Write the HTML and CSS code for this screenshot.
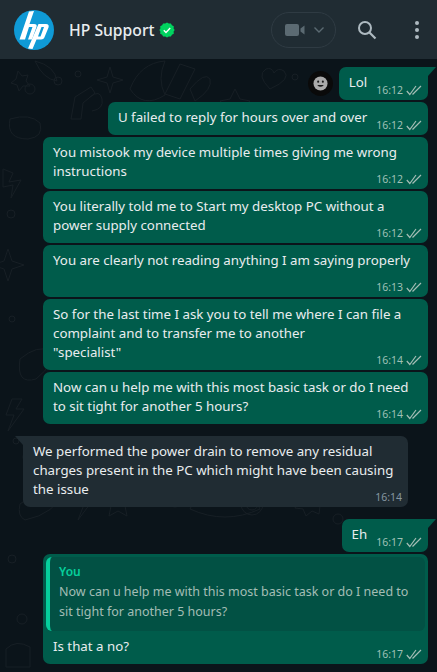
FILE: index.html
```html
<!DOCTYPE html>
<html lang="en">
<head>
  <meta charset="UTF-8" />
  <title>HP Support</title>
  <link rel="stylesheet" href="styles.css">
</head>
<body>
<div class="app">
  <header class="topbar">
    <svg class="avatar" viewBox="0 0 40 40">
      <circle cx="20" cy="20" r="20" fill="#0f9ad6"/>
      <path d="M15 1.5 L20 1 L15.5 14 L20 14 Q23.5 14 22.5 17 L18 29.5 L14 29.5 L18.5 17 L15 17 L11 29.5 L5.5 29.5 Z" fill="#fff"/>
      <path d="M24.5 14 L32 14 Q35.5 14 34.5 17.5 L31 26 Q30 29.5 27 29.5 L22.5 29.5 L18.5 39 L14 38.5 Z M27.5 17 L24 26.5 L26.5 26.5 L30 17 Z" fill="#fff" fill-rule="evenodd"/>
    </svg>
    <div class="contact">HP Support</div>
    <svg class="verified" viewBox="0 0 16 16">
      <path d="M8 0.5l1.8 1.1 2.1-.2 1 1.9 1.9 1-.2 2.1L15.7 8l-1.1 1.6.2 2.1-1.9 1-1 1.9-2.1-.2L8 15.5l-1.8-1.1-2.1.2-1-1.9-1.9-1 .2-2.1L.3 8l1.1-1.6-.2-2.1 1.9-1 1-1.9 2.1.2z" fill="#00d35f"/>
      <path d="M4.8 8.2l2.2 2.2 4.2-4.3" fill="none" stroke="#fff" stroke-width="1.4"/>
    </svg>
    <div class="call-pill">
      <svg class="cam" viewBox="0 0 20 12"><rect x="0" y="0" width="14" height="12" rx="2" fill="#5b6a72"/><path d="M15.5 4.5l4-3v9l-4-3z" fill="#5b6a72"/></svg>
      <svg class="chev" viewBox="0 0 10 6"><path d="M.5 .5l4.5 4.5 4.5-4.5" fill="none" stroke="#5b6a72" stroke-width="1.4"/></svg>
    </div>
    <svg class="search" viewBox="0 0 20 20"><circle cx="8" cy="8" r="6" fill="none" stroke="#aebac1" stroke-width="2"/><path d="M12.5 12.5l6 6" stroke="#aebac1" stroke-width="2.2"/></svg>
    <div class="dots"><i></i><i></i><i></i></div>
  </header>

  <main class="chat">
    <svg class="doodles" viewBox="0 0 437 613">
      <g fill="none" stroke="#171f25" stroke-width="1">
        <path d="M18 12l4 5 6-1-2 6 4 5-7 0-4 5-2-6-6-2 5-4z"/>
        <path d="M35 2q20 5 22 20q-14-2-22-20z"/>
        <circle cx="58" cy="22" r="4"/><circle cx="30" cy="30" r="5"/><circle cx="78" cy="15" r="3"/>
        <path d="M110 8l3 10 10 3-10 3-3 10-3-10-10-3 10-3z"/>
        <path d="M75 38l16-10 4 6-12 10-2 16h-10z"/><path d="M90 38q10-8 12 2t-10 12"/>
        <path d="M130 30q10-26 35-28q-8 18 0 34q-22 14-35-6z"/>
        <path d="M165 35l15-30 15 5-15 30z"/><path d="M190 30q15-18 20-10q3 10-15 22z"/>
        <path d="M235 30l5 10 10 2-8 7 2 10-9-5-9 5 2-10-8-7 10-2z"/>
        <path d="M10 60q20-6 30 4q4 14-12 16q-22 0-18-20z"/>
        <path d="M270 30q-14-14-4-20q6-2 8 4q4-6 10-2q8 8-14 18z"/><circle cx="295" cy="18" r="3"/>
        <path d="M3 110l10 4-4 9 12-2-10 18 2-13-10 2z"/><circle cx="11" cy="155" r="4"/>
        <path d="M8 190l4 12 12 4-12 4-4 12-4-12-12-4 12-4z"/>
        <path d="M20 300q18-15 30-8q6 12-14 28q-20 6-16-20z"/><circle cx="12" cy="260" r="3"/>
        <path d="M12 340l-6 16h8l-6 16 16-22h-8l6-10z"/><circle cx="16" cy="382" r="3"/><circle cx="28" cy="398" r="5"/>
        <path d="M20 445q30-22 45-14q-10 24-40 30q-8-4-5-16z"/>
        <path d="M82 425l-7 18h10l-7 18 18-24h-9l7-12z"/><circle cx="70" cy="410" r="4"/><circle cx="100" cy="428" r="3"/>
        <path d="M118 430l4 9 10 1-7 7 2 10-9-5-9 5 2-10-7-7 10-1z"/>
        <path d="M150 395q30-8 50 0v22h-50z"/><circle cx="175" cy="440" r="8"/>
        <path d="M205 420q20-10 40 0l15 30q-35 16-70 0z"/><circle cx="252" cy="445" r="11"/><circle cx="252" cy="445" r="6"/>
        <path d="M238 400v20m6-20v20"/>
        <path d="M300 425l8 3 6-5 3 7 8 1-3 7 5 6-7 3-1 8-7-3-6 5-3-7-8-1 3-7-5-6 7-3z"/><circle cx="308" cy="440" r="5"/>
        <circle cx="338" cy="460" r="5"/>
        <circle cx="12" cy="500" r="4"/><circle cx="22" cy="560" r="5"/><path d="M6 590q10-10 24-2v20h-24z"/>
      </g>
    </svg>

    <div class="row out">
      <div class="react"><svg viewBox="0 0 16 16"><circle cx="8" cy="8" r="7.5" fill="#aaa"/><circle cx="5.5" cy="6" r="1.1" fill="#1a1a1a"/><circle cx="10.5" cy="6" r="1.1" fill="#1a1a1a"/><path d="M4.5 9.5q3.5 4 7 0z" fill="#1a1a1a"/></svg></div>
      <div class="bubble tail">Lol<span class="meta">16:12<svg class="tick" viewBox="0 0 16 11"><path d="M.8 6l3 3.5L10 1M6.5 9.5L15 1" fill="none" stroke="#a4bdb5" stroke-width="1.2"/></svg></span></div>
    </div>
    <div class="row out">
      <div class="bubble">U failed to reply for hours over and over<span class="meta">16:12<svg class="tick" viewBox="0 0 16 11"><path d="M.8 6l3 3.5L10 1M6.5 9.5L15 1" fill="none" stroke="#a4bdb5" stroke-width="1.2"/></svg></span></div>
    </div>
    <div class="row out">
      <div class="bubble wide">You mistook my device multiple times giving me wrong<br>instructions<span class="meta">16:12<svg class="tick" viewBox="0 0 16 11"><path d="M.8 6l3 3.5L10 1M6.5 9.5L15 1" fill="none" stroke="#a4bdb5" stroke-width="1.2"/></svg></span></div>
    </div>
    <div class="row out">
      <div class="bubble wide">You literally told me to Start my desktop PC without a<br>power supply connected<span class="meta">16:12<svg class="tick" viewBox="0 0 16 11"><path d="M.8 6l3 3.5L10 1M6.5 9.5L15 1" fill="none" stroke="#a4bdb5" stroke-width="1.2"/></svg></span></div>
    </div>
    <div class="row out">
      <div class="bubble wide">You are clearly not reading anything I am saying properly<br>&nbsp;<span class="meta">16:13<svg class="tick" viewBox="0 0 16 11"><path d="M.8 6l3 3.5L10 1M6.5 9.5L15 1" fill="none" stroke="#a4bdb5" stroke-width="1.2"/></svg></span></div>
    </div>
    <div class="row out">
      <div class="bubble wide">So for the last time I ask you to tell me where I can file a<br>complaint and to transfer me to another<br>"specialist"<span class="meta">16:14<svg class="tick" viewBox="0 0 16 11"><path d="M.8 6l3 3.5L10 1M6.5 9.5L15 1" fill="none" stroke="#a4bdb5" stroke-width="1.2"/></svg></span></div>
    </div>
    <div class="row out">
      <div class="bubble wide">Now can u help me with this most basic task or do I need<br>to sit tight for another 5 hours?<span class="meta">16:14<svg class="tick" viewBox="0 0 16 11"><path d="M.8 6l3 3.5L10 1M6.5 9.5L15 1" fill="none" stroke="#a4bdb5" stroke-width="1.2"/></svg></span></div>
    </div>

    <div class="row in">
      <div class="bubble recv tail-left">We performed the power drain to remove any residual<br>charges present in the PC which might have been causing<br>the issue<span class="meta">16:14</span></div>
    </div>

    <div class="row out eh">
      <div class="bubble tail">Eh<span class="meta">16:17<svg class="tick" viewBox="0 0 16 11"><path d="M.8 6l3 3.5L10 1M6.5 9.5L15 1" fill="none" stroke="#a4bdb5" stroke-width="1.2"/></svg></span></div>
    </div>
    <div class="row out">
      <div class="bubble wide reply-bubble">
        <div class="quote">
          <div class="quote-name">You</div>
          <div class="quote-text">Now can u help me with this most basic task or do I need to<br>sit tight for another 5 hours?</div>
        </div>
        <div class="reply-text">Is that a no?<span class="meta">16:17<svg class="tick" viewBox="0 0 16 11"><path d="M.8 6l3 3.5L10 1M6.5 9.5L15 1" fill="none" stroke="#a4bdb5" stroke-width="1.2"/></svg></span></div>
      </div>
    </div>
  </main>
</div>
</body>
</html>
```

FILE: styles.css
```css
* {
  box-sizing: border-box;
}
html, body {
  margin: 0;
  height: 100%;
}
body {
  background: #0b141a;
  font-family: "Noto Sans", "Open Sans", sans-serif;
  color: #e9edef;
  overflow: hidden;
}
.app {
  width: 437px;
  height: 672px;
  display: flex;
  flex-direction: column;
}
.topbar {
  height: 59px;
  flex: none;
  background: #202c33;
  display: flex;
  align-items: center;
  padding: 0 18px 0 14px;
}
.avatar {
  width: 40px;
  height: 40px;
  flex: none;
}
.contact {
  margin-left: 15px;
  font-size: 15.7px;
  font-weight: 500;
  color: #e9edef;
  line-height: 20px;
}
.verified {
  width: 16px;
  height: 16px;
  margin-left: 4px;
}
.call-pill {
  margin-left: auto;
  width: 65px;
  height: 36px;
  border: 1px solid #2f3b43;
  border-radius: 18px;
  display: flex;
  align-items: center;
  padding-left: 13px;
  gap: 9px;
}
.cam {
  width: 20px;
  height: 12px;
}
.chev {
  width: 10px;
  height: 6px;
}
.search {
  width: 20px;
  height: 20px;
  margin-left: 21px;
}
.dots {
  margin-left: 38px;
  display: flex;
  flex-direction: column;
  gap: 3px;
}
.dots i {
  width: 4px;
  height: 4px;
  border-radius: 50%;
  background: #aebac1;
}
.chat {
  position: relative;
  flex: 1;
  overflow: hidden;
  display: flex;
  flex-direction: column;
  padding-top: 8px;
  gap: 2px;
}
.doodles {
  position: absolute;
  left: 0;
  top: 0;
  width: 437px;
  height: 613px;
}
.row {
  position: relative;
  display: flex;
  align-items: center;
  padding: 0 9px 0 23px;
}
.row.out {
  justify-content: flex-end;
}
.row.in, .row.eh {
  margin-top: 10px;
}
.bubble {
  position: relative;
  background: #005c4b;
  border-radius: 7px;
  font-size: 13.3px;
  line-height: 19px;
  padding: 6px 9px 8px 10px;
  white-space: nowrap;
}
.bubble.wide {
  width: 385px;
}
.bubble.recv {
  background: #202c33;
  width: 385px;
}
.tail {
  border-top-right-radius: 0;
}
.tail::after {
  content: "";
  position: absolute;
  right: -8px;
  top: 0;
  border-top: 9px solid #005c4b;
  border-right: 8px solid transparent;
}
.tail-left {
  border-top-left-radius: 0;
}
.tail-left::before {
  content: "";
  position: absolute;
  left: -8px;
  top: 0;
  border-top: 9px solid #202c33;
  border-left: 8px solid transparent;
}
.meta {
  float: right;
  display: inline-flex;
  align-items: center;
  gap: 3px;
  margin: 10px -3px -11px 9px;
  font-size: 10.5px;
  line-height: 15px;
  color: #9fc0b6;
}
.bubble.recv .meta {
  color: #8696a0;
}
.tick {
  width: 16px;
  height: 11px;
}
.react {
  width: 25px;
  height: 25px;
  margin-right: 6px;
  background: #0a0a0a;
  border-radius: 50%;
  display: flex;
  align-items: center;
  justify-content: center;
}
.react svg {
  width: 15px;
  height: 15px;
}
.reply-bubble {
  padding: 3px 3px 8px 3px;
}
.quote {
  background: #025144;
  border-left: 4px solid #06cf9c;
  border-radius: 6px;
  padding: 5px 10px 9px 9px;
  font-size: 12.5px;
  line-height: 20px;
  color: #a3bdb5;
}
.quote-name {
  color: #06cf9c;
  font-size: 12px;
  font-weight: 600;
}
.reply-text {
  padding: 6px 6px 0 7px;
}
```
